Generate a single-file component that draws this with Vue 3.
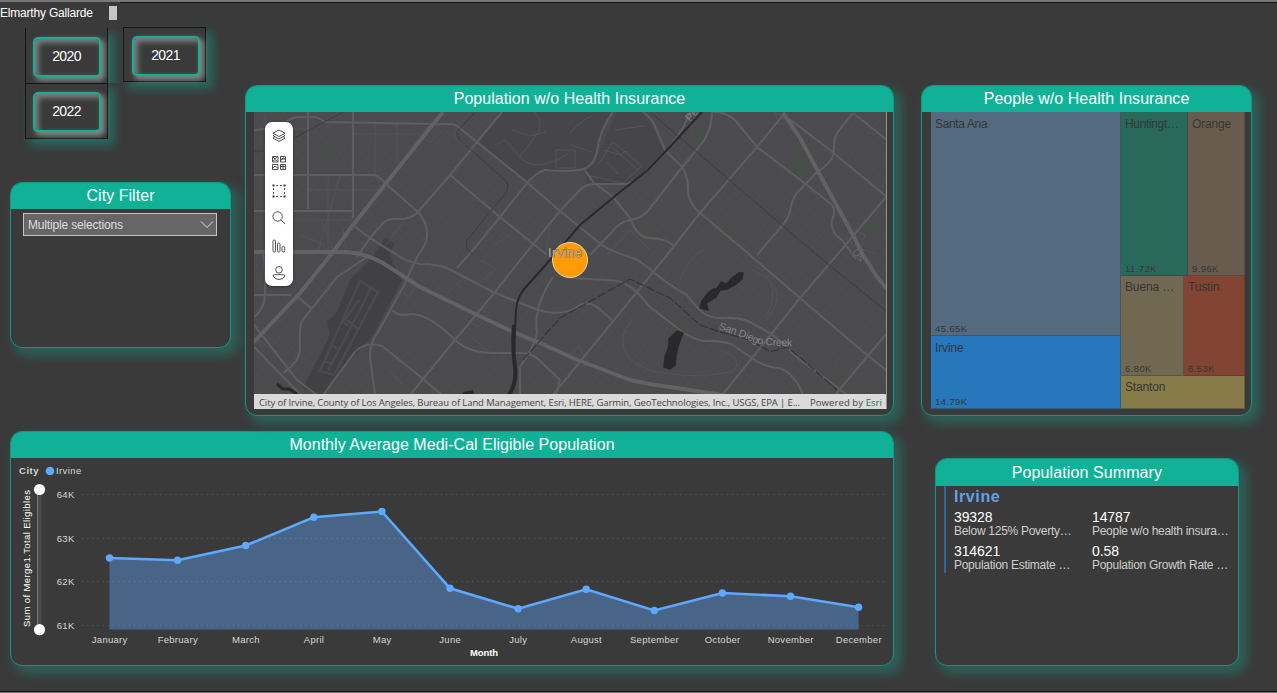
<script setup>
const years = ['2020', '2022', '2021']

const months = ['January', 'February', 'March', 'April', 'May', 'June', 'July', 'August', 'September', 'October', 'November', 'December']
const levels = [558, 560.3, 545.5, 517.3, 511.5, 588.3, 608.7, 589.3, 610.5, 593, 596.3, 607.3]
const points = months.map((name, i) => ({ name, x: 109.5 + i * 68.1, y: levels[i] }))
const line = points.map(p => `${p.x},${p.y}`).join(' ')
const area = `109.5,629.5 ${line} 858.6,629.5`
const ticks = [
  { label: '64K', y: 494.5 },
  { label: '63K', y: 538.5 },
  { label: '62K', y: 581.5 },
  { label: '61K', y: 625.5 },
]

const stats = [
  { value: '39328', label: 'Below 125% Poverty…' },
  { value: '14787', label: 'People w/o health insura…' },
  { value: '314621', label: 'Population Estimate …' },
  { value: '0.58', label: 'Population Growth Rate …' },
]

const freeways = [
  'M443 112L430 128L387 182L353 225L333 252L300 293L254 342',
  'M254 252H345Q365 253 383 263L420 287L473 313L513 332L540 343L573 358L583 362L630 380Q650 385 670 387L723 395',
  'M783 113L800 138L827 188L853 235L863 255L877 277L887 289',
]
const roads = [
  'M254 130L265 129M287 121Q293 117 300 117H313Q318 117 325 122L433 124H450Q456 124 462 130L478 143L528 183L560 211L602 245Q610 251 630 257Q640 260 653 272Q672 287 687 295Q694 305 703 313Q712 319 725 318Q745 317 757 326Q775 335 787 347Q798 360 810 367L837 387L847 395',
  'M308 112V209M353 112V218M254 175H373Q378 175 385 183L418 212Q428 222 427 238Q424 248 418 255L403 287L378 332Q370 342 370 357L375 395',
  'M254 211H352M502 112L477 142L450 175L418 212Q412 219 400 219Q390 218 384 222L370 238L357 257',
  'M450 175L500 217L547 255M353 225L370 238L397 255Q407 262 420 264Q436 264 447 268L493 292L533 308Q560 319 580 305Q588 301 597 307L612 320',
  'M457 268L473 250L500 217L527 183Q537 172 545 170Q562 172 580 170Q593 168 597 152Q599 131 613 112',
  'M410 395L455 340L495 292L530 248L560 211L578 192Q584 184 594 184L626 184Q636 182 650 168L667 150L683 128L690 112',
  'M643 112Q652 119 655 126L665 150L683 168Q688 178 688 188Q687 202 700 213L750 255L800 298L867 355L887 371',
  'M712 112Q712 132 699 147L680 170L647 212Q640 219 630 220Q619 222 611 233L590 255',
  'M783 115L757 147L700 213L667 255L637 292L587 353L553 395',
  'M713 112Q726 112 735 120L757 147L807 185L831 204Q837 210 832 220Q829 231 842 240L856 259',
  'M788 118L830 150L887 197M853 113L840 129Q833 137 834 150Q833 163 817 172L797 193Q792 199 790 211Q788 220 780 228L757 255',
  'M853 113L887 140M887 196L837 255L800 298L752 358L723 394M887 333L835 395',
  'M570 278L608 280Q624 280 637 292L650 307L680 330Q690 338 703 341Q723 340 733 345L752 358Q761 366 779 368Q795 373 803 395',
  'M585 170L593 182L613 197L630 218Q637 237 648 238Q665 238 673 245',
  'M254 325L297 380L317 395M254 347L299 393M263 253Q267 280 264 302Q261 312 254 317M254 295H292M367 257L337 277L302 321Q299 327 300 350Q299 362 283 373M298 297L312 309',
  'M392 310Q398 317 411 314Q429 314 455 340Q469 353 494 353L520 353Q533 353 540 361L560 380L556 395',
  'M323 395L354 353Q364 341 382 346L422 378L442 395M553 277Q533 307 537 332Q536 344 520 367V395',
]
const minor = [
  'M265 115V129H308M276 176V208M328 176V252M353 190H383M353 134H420M375 124V176M397 124V160M308 190H353M265 220H352M340 176L318 252',
  'M425 130L433 123L441 132L430 142L420 137ZM380 174Q373 183 386 191Q398 182 387 173M408 215L386 245M470 112L454 132Q454 140 465 145M322 222L333 250M300 235L325 245M343 229L347 255',
  'M495 145L505 140L523 160Q530 166 544 164Q562 160 570 151M512 130L530 136L546 132M535 112Q545 125 536 135L519 158M556 150H575V168H556Z',
  'M598 165L613 142L642 166L623 183L590 176M604 150L620 155L626 151L632 158M607 162L618 174M613 148L638 170M570 133Q583 119 592 116M570 145L592 152M615 130L644 126',
  'M680 280Q690 255 705 250M720 350Q747 361 731 372Q690 380 652 371Q613 355 626 330M755 265Q785 286 765 318M632 321Q609 344 640 368M752 270Q795 288 765 321',
  'M775 112L788 121L779 125ZM850 228L865 235L860 250L846 239ZM860 248L875 254M480 260L496 269L477 285M447 293L466 276L478 285M495 245L510 235M550 228L545 258M607 255L630 230L650 250',
  'M464 320L473 307L490 313L479 327L465 319M408 280Q399 298 410 296L417 284L410 275M569 355L579 346L590 366L576 365ZM254 323L278 345M257 340L286 357M342 371L356 354M390 370L403 385M467 333L490 353',
]
</script>

<template>
  <main class="dash">
    <div class="byline"><span>Elmarthy Gallarde</span><i></i></div>
    <div class="board">
      <div class="left">
        <div class="upper">
          <aside class="side">
            <div class="years">
              <div v-for="(y, i) in years" :key="y" class="cell" :class="'c' + i">
                <button class="year">{{ y }}</button>
              </div>
            </div>
            <section class="card filter">
              <h2>City Filter</h2>
              <div class="select">
                <span>Multiple selections</span>
                <svg width="14" height="9" viewBox="0 0 14 9"><path d="M1 1.500L7 7.500L13 1.500" fill="none" stroke="#ddd" /></svg>
              </div>
            </section>
          </aside>

          <section class="card mapcard">
            <h2>Population w/o Health Insurance</h2>
            <div class="map">
              <svg class="tiles" viewBox="254 112 633 297" width="633" height="297">
                <defs>
                  <pattern id="blocks" width="17" height="14" patternUnits="userSpaceOnUse" patternTransform="rotate(39)">
                    <path d="M0 3H17M4 0V14M11 3V10H17" fill="none" stroke="#515153" stroke-width=".9" />
                  </pattern>
                </defs>
                <rect x="254" y="112" width="633" height="297" fill="#4b4b4d" />
                <rect x="254" y="112" width="633" height="297" fill="url(#blocks)" opacity=".4" />
                <path d="M502 112H613L602 128L597 152L587 168L543 171L527 183L480 142ZM617 112H643L665 150L650 168L630 183L587 184L585 170L600 150Z" fill="#464648" />
                <path d="M373 256L385 238L394 243L390 256L402 281L373 335L322 395L303 388L330 335L327 321L336 314L350 280Z" fill="#414143" />
                <path d="M360 281L378 292L334 375L320 371L350 303ZM372 286L328 371M359 300L343 322L349 326M331 345L337 349M325 361L331 364M347 320L358 329" fill="none" stroke="#4b4b4d" stroke-width="2.500" />
                <g fill="#484d49"><path d="M317 143h9v15h-9zM327 178l6 8-2 8zM797 142L812 163L810 177L794 173ZM695 132L707 124L710 136L695 147ZM865 228L878 219L883 229L868 236ZM724 230L735 224L738 228L729 236ZM647 230L657 234L650 241ZM675 323L686 315L692 324L681 331ZM570 240L590 248L580 258ZM833 373L840 366L846 372L839 379Z" /></g>
                <g fill="none" stroke="#545456" stroke-width="1"><path v-for="d in minor" :key="d" :d="d" /></g>
                <g fill="none" stroke="#5e5e60" stroke-width="2.100" stroke-linejoin="round"><path v-for="d in roads" :key="d" :d="d" /></g>
                <g fill="none" stroke="#626264" stroke-width="4" stroke-linejoin="round"><path v-for="d in freeways" :key="d" :d="d" /></g>
                <path d="M650 112L817 255L887 312M474 113L457 132Q455 139 470 149L505 180Q511 186 505 194L467 240Q464 247 473 255M254 151H270M294 138L347 110" fill="none" stroke="#3c3c3e" stroke-width="1" />
                <path d="M523 360L560 318L630 279L670 298L700 325L720 332L750 340L770 352L787 347L803 360L837 390" fill="none" stroke="#343436" stroke-width="1.100" stroke-dasharray="9 2" />
                <path d="M702 112L678 138L665 152L648 170L620 192L580 225L550 260L525 288Q517 297 516 310L514 350" fill="none" stroke="#29292b" stroke-width="2" />
                <path d="M514 325Q512 345 515 367Q517 382 509 395" fill="none" stroke="#29292d" stroke-width="4" />
                <path d="M277 384L283 389L289 389L297 394" fill="none" stroke="#29292d" stroke-width="3" />
                <path d="M462 395L463 392L473 390L474 395Z" fill="#29292d" />
                <path d="M743 273L742 279L736 284L727 289L720 290L716 297L706 303L708 310L700 308L702 301L709 292L713 289L717 289L721 282L727 284L732 278L739 273ZM677 331L683 333L678 346L676 356L675 365L670 369L664 367L665 357L669 346L669 339Z" fill="#29292d" stroke="#29292d" stroke-width="1.500" stroke-linejoin="round" />
                <path id="creek" d="M718 329Q740 336 755 343Q776 347 796 346" fill="none" />
                <text class="place"><textPath href="#creek" textLength="77">San Diego Creek</textPath></text>
                <text class="place" transform="translate(690 122) rotate(-48)">Pe</text>
                <text class="place" transform="translate(852 252) rotate(52)" opacity=".5">Us</text>
                <circle cx="570" cy="260" r="17.500" fill="#ff9b05" stroke="#e8d9b0" stroke-width="1" />
                <text class="pin" x="548" y="257" textLength="34">Irvine</text>
                <rect x="254" y="394" width="633" height="15" fill="#dadada" />
                <g class="credit">
                  <text x="259" y="406" textLength="541">City of Irvine, County of Los Angeles, Bureau of Land Management, Esri, HERE, Garmin, GeoTechnologies, Inc., USGS, EPA | E...</text>
                  <text x="810" y="406" textLength="72">Powered by <tspan fill="#1f6b5c">Esri</tspan></text>
                </g>
                <path d="M886.500 112V409" stroke="#929292" />
              </svg>
              <div class="tools">
                <svg viewBox="0 0 16 16"><path d="M8 2L14 5.200L8 8.500L2 5.200ZM3.400 6.700L2 7.700L8 11L14 7.700L12.600 6.700M3.400 9.200L2 10.200L8 13.500L14 10.200L12.600 9.200" /></svg>
                <svg viewBox="0 0 16 16"><path d="M1.500 1.500H7V7H1.500ZM9.500 1.500H14.500V7H9.500ZM1.500 9.500H7V14.500H1.500ZM9.500 9.500H14.500V14.500H9.500ZM2 2L4 4L6 2.500M2 6L4 4.500L6.500 6.500M10 5.500L12 3L14 3.500M10 4H14M2 13L4 11L6.500 13M10 11.500H14M12 10V14" /></svg>
                <svg viewBox="0 0 16 16"><path d="M5 2.500H7M9 2.500H11M5 13.500H7M9 13.500H11M2.500 5V7M2.500 9V11M13.500 5V7M13.500 9V11" /><path class="solid" d="M1.500 1.500h2v2h-2zM12.500 1.500h2v2h-2zM1.500 12.500h2v2h-2zM12.500 12.500h2v2h-2z" /></svg>
                <svg viewBox="0 0 16 16"><circle cx="6.600" cy="6.500" r="4.700" /><path d="M10 9.900L14.200 14.100" /></svg>
                <svg viewBox="0 0 16 16"><rect x="2" y="2" width="2.500" height="12" rx="1.200" /><rect x="6.500" y="5" width="2.500" height="9" rx="1.200" /><rect x="11" y="8.500" width="2.700" height="5.500" rx="1.300" /></svg>
                <svg viewBox="0 0 16 16"><circle cx="8" cy="4.800" r="3.300" /><path d="M3.500 9.700H12.500Q14 9.700 13.800 11Q12.500 14.500 8 14.500Q3.500 14.500 2.200 11Q2 9.700 3.500 9.700Z" /></svg>
              </div>
            </div>
          </section>
        </div>

        <section class="card chart">
          <h2>Monthly Average Medi-Cal Eligible Population</h2>
          <svg viewBox="11 458 882 206" width="882" height="206">
            <text class="key" x="19" y="474" textLength="19.500">City</text>
            <circle cx="50" cy="471" r="4.300" fill="#5ea8fd" />
            <text class="lab" x="56" y="474" textLength="25.500">Irvine</text>
            <polygon :points="area" fill="#5ea8fd" fill-opacity=".4" />
            <g v-for="t in ticks" :key="t.label">
              <path :d="`M82 ${t.y}H887`" stroke="#fff" stroke-opacity=".18" stroke-dasharray="1 4.200" />
              <text class="lab" x="74.500" :y="t.y + 3.500" text-anchor="end">{{ t.label }}</text>
            </g>
            <polyline :points="line" fill="none" stroke="#5ea8fd" stroke-width="2.600" />
            <g v-for="p in points" :key="p.name">
              <circle :cx="p.x" :cy="p.y" r="3.700" fill="#5ea8fd" />
              <text class="lab" :x="p.x + .2" y="643" text-anchor="middle">{{ p.name }}</text>
            </g>
            <text class="axis" x="484" y="656" text-anchor="middle" textLength="28">Month</text>
            <text class="vert" transform="translate(30 627) rotate(-90)" textLength="137">Sum of Merge1.Total Eligibles</text>
            <rect x="37" y="490" width="4.500" height="140" fill="#4c4b4a" />
            <path d="M37.500 490V630" stroke="#777" />
            <circle cx="39.500" cy="489.500" r="5.600" fill="#fff" />
            <circle cx="39.500" cy="629.700" r="5.600" fill="#fff" />
          </svg>
        </section>
      </div>

      <div class="right">
        <section class="card tree">
          <h2>People w/o Health Insurance</h2>
          <div class="treemap">
            <div class="tcol big">
              <div class="tile santa"><b>Santa Ana</b><i>45.65K</i></div>
              <div class="tile irvine"><b>Irvine</b><i>14.79K</i></div>
            </div>
            <div class="tcol">
              <div class="trow first">
                <div class="tile hunt"><b>Huntingt…</b><i>11.72K</i></div>
                <div class="tile orange"><b>Orange</b><i>9.96K</i></div>
              </div>
              <div class="trow second">
                <div class="tile buena"><b>Buena …</b><i>6.80K</i></div>
                <div class="tile tustin"><b>Tustin</b><i>6.53K</i></div>
              </div>
              <div class="tile stanton"><b>Stanton</b></div>
            </div>
          </div>
        </section>

        <section class="card summary">
          <h2>Population Summary</h2>
          <div class="sum">
            <h3>Irvine</h3>
            <div class="stats">
              <div v-for="s in stats" :key="s.label"><strong>{{ s.value }}</strong><span>{{ s.label }}</span></div>
            </div>
          </div>
        </section>
      </div>
    </div>
  </main>
</template>

<style>
body { background: #3a3a3a; overflow: hidden; }
</style>

<style scoped>
* { box-sizing: border-box; }
.dash {
  width: 1277px; height: 693px; background: #3a3a3a; overflow: hidden;
  border-top: 2px solid #777; border-bottom: 1px solid #777;
  box-shadow: inset 0 -1px #111;
  font-family: "Liberation Sans", Arial, sans-serif; color: #fff;
}
.byline { height: 25px; display: flex; font-size: 12px; line-height: 22px; letter-spacing: -.2px; background: linear-gradient(#111, #111) 120px 0 / 1157px 1px no-repeat; }
.byline span { width: 109px; white-space: nowrap; }
.byline i { width: 8px; height: 14px; margin-top: 4px; background: #c6c6c6; }
.board { display: flex; }
.left { width: 894px; padding-left: 10px; }
.upper { display: flex; height: 404px; }
.side { width: 221px; }
.years { display: grid; grid-template: 56px 55px / 83px 83px; column-gap: 15px; padding-left: 15px; height: 155px; }
.cell { border: 1px solid #161616; padding: 8px 0 0 7px; box-shadow: 6px 6px 9px 1px rgba(16, 177, 150, .38); }
.c0 { border-top: 0; border-bottom: 0; margin-top: 1px; clip-path: inset(0 -20px 0 0); padding-top: 9px; }
.c1 { grid-row: 2; grid-column: 1; height: 56px; }
.c2 { grid-row: 1; grid-column: 2; height: 55px; padding-left: 8px; }
.year {
  display: block; width: 68px; height: 40px; padding: 0 1px 2px 0; border: 2px solid #10b197; border-radius: 5px; background: #3a3a3a;
  color: #fff; font: 14px "Liberation Sans", Arial, sans-serif; letter-spacing: -.6px;
  box-shadow: 3px 3px 5px 1px rgba(220, 235, 225, .42), inset 3px 3px 5px 1px rgba(220, 235, 225, .38);
}
.card { border: 1px solid #16957f; border-radius: 12px; background: #3a3a3a; box-shadow: 6px 6px 11px 2px rgba(16, 177, 150, .33); }
.card h2 { margin: 0; height: 26px; border-radius: 11px 11px 0 0; background: #10b197; font-size: 16px; font-weight: 400; line-height: 26px; letter-spacing: .04px; text-align: center; white-space: nowrap; }
.filter { height: 166px; }
.select { display: flex; align-items: center; justify-content: space-between; height: 23px; width: 194px; margin: 4px 0 0 12px; padding: 0 2px 0 4px; border: 1px solid #c4c4c4; background: #666; color: #ddd; font-size: 12px; letter-spacing: -.17px; }
.mapcard { width: 649px; height: 331px; margin: 58px 0 0 14px; }
.map { display: grid; margin-left: 8px; width: 633px; height: 297px; }
.tiles, .tools { grid-area: 1 / 1; }
.tools { display: flex; flex-direction: column; justify-content: space-between; align-items: center; width: 28px; height: 164px; margin: 10px 0 0 11px; padding: 6px 0 5px; border-radius: 7px; background: #fff; box-shadow: 0 1px 3px rgba(0, 0, 0, .4); }
.tools svg { width: 16px; height: 16px; fill: none; stroke: #3c3c3c; stroke-width: .9; }
.tools .solid { fill: #333; stroke: none; }
.place { font-size: 10.500px; fill: #858588; }
.pin { font-size: 13px; fill: #b3b0aa; stroke: rgba(70, 66, 62, .55); stroke-width: 1px; paint-order: stroke; }
.credit { font: 9.500px "Open Sans", "Noto Sans", sans-serif; fill: #444; }
.chart { height: 235px; }
.chart svg { display: block; }
.lab { font-size: 9.500px; letter-spacing: .28px; fill: #d8d6d4; }
.key { font-size: 9.500px; font-weight: 700; fill: #d8d6d4; }
.axis { font-size: 9.500px; font-weight: 700; fill: #fff; }
.vert { font-size: 9.500px; fill: #fff; }
.right { padding: 58px 0 0 27px; }
.tree { width: 331px; height: 331px; }
.treemap { display: flex; width: 314px; height: 297px; margin-left: 9px; color: #363636; }
.tcol { display: flex; flex-direction: column; }
.big { width: 190px; }
.trow { display: flex; }
.first { height: 164px; }
.second { height: 100px; }
.tile { display: flex; flex-direction: column; justify-content: space-between; border: 1px solid rgba(58, 58, 58, .45); border-width: 0 1px 1px 0; padding: 5px 0 1px 4px; white-space: nowrap; overflow: hidden; }
.tile b { font-size: 12px; font-weight: 400; line-height: 14px; letter-spacing: -.15px; }
.tile i { font-size: 9.500px; font-style: normal; line-height: 11px; letter-spacing: .4px; }
.santa { height: 224px; background: #536a7f; }
.santa b { letter-spacing: -.35px; }
.irvine { height: 73px; background: #2777bd; }
.hunt { width: 67px; background: #29695c; }
.hunt b { letter-spacing: -.35px; }
.orange { width: 57px; background: #695c4e; }
.buena { width: 63px; background: #706851; padding-top: 4px; }
.tustin { width: 61px; background: #824433; padding-top: 4px; }
.stanton { height: 33px; background: #877c49; padding-top: 4px; }
.summary { width: 304px; height: 208px; margin: 42px 0 0 14px; }
.summary h2 { height: 27px; line-height: 28px; letter-spacing: .1px; }
.sum { margin-left: 8px; height: 87px; padding-left: 8px; border-left: 2px solid #30649a; }
.sum h3 { margin: 0; color: #62a2e2; font-size: 16px; line-height: 21px; height: 23px; letter-spacing: .6px; }
.stats { display: grid; grid-template-columns: 138px 140px; grid-auto-rows: 34px; white-space: nowrap; }
.stats strong, .stats span { display: block; }
.stats strong { font-size: 14px; font-weight: 400; line-height: 16px; letter-spacing: -.1px; }
.stats span { color: #cfcdcb; font-size: 12px; line-height: 12px; letter-spacing: -.28px; }
</style>
